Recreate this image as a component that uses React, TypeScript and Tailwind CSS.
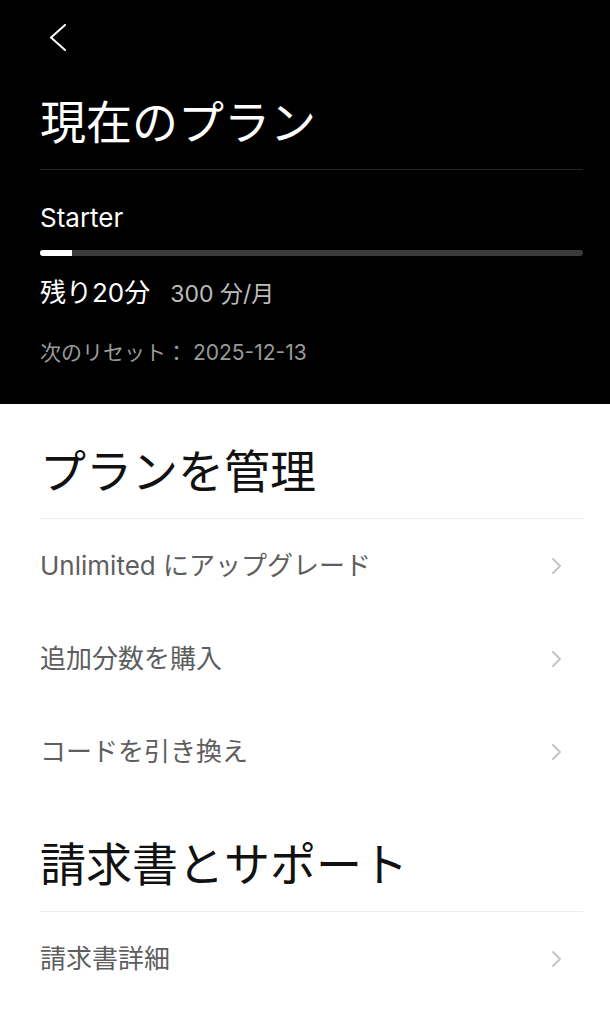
const FONT = "font-['Inter','Noto_Sans_CJK_JP',sans-serif]";

const manageItems = ['Unlimited にアップグレード', '追加分数を購入', 'コードを引き換え'];
const billingItems = ['請求書詳細'];

const Row = ({ label }: { label: string }) => (
  <button type="button" className="flex h-[93px] w-full items-center justify-between text-left">
    <span className="text-[26px] leading-none text-[#5e5e5e]">{label}</span>
    <svg width="12" height="18" viewBox="0 0 12 18" fill="none" className="mr-[20px]">
      <path d="M2 2l7 7-7 7" stroke="#c4c4c4" strokeWidth="2" strokeLinecap="round" strokeLinejoin="round" />
    </svg>
  </button>
);

export default function App() {
  const used = 280;
  const total = 300;
  const remaining = total - used;

  return (
    <div className={`min-h-screen w-full bg-white ${FONT}`}>
      {/* Current plan */}
      <header className="bg-black pl-10 pr-[27px] pt-6 pb-[41px]">
        <button type="button" aria-label="戻る" className="ml-[9px] block">
          <svg width="18" height="27" viewBox="0 0 18 27" fill="none">
            <path d="M16 1L2 13.5 16 26" stroke="#fff" strokeWidth="2" strokeLinecap="round" strokeLinejoin="round" />
          </svg>
        </button>
        <h1 className="mt-[48px] text-[46px] leading-none font-normal text-white">現在のプラン</h1>
        <div className="mt-6 h-px bg-[#262626]" />

        <p className="mt-[35px] text-[26px] leading-none text-white">Starter</p>
        <div className="mt-[19px] h-[6px] w-full overflow-hidden rounded-full bg-[#3a3a3a]">
          <div className="h-full bg-white" style={{ width: `${(remaining / total) * 100 * 0.88}%` }} />
        </div>

        <div className="mt-[24px] flex items-baseline gap-[20px]">
          <span className="text-[26px] leading-none text-white">残り{remaining}分</span>
          <span className="text-[23px] leading-none text-[#bdbdbd]">{total} 分/月</span>
        </div>
        <p className="mt-[36px] text-[21px] leading-none text-[#9a9a9a]">次のリセット： 2025-12-13</p>
      </header>

      {/* Manage */}
      <section className="pl-10 pr-[27px] pt-[44px]">
        <h2 className="text-[46px] leading-none font-normal text-[#111]">プランを管理</h2>
        <div className="mt-6 h-px bg-[#ededed]" />
        {manageItems.map((item) => (
          <Row key={item} label={item} />
        ))}
      </section>

      {/* Billing */}
      <section className="pl-10 pr-[27px] pt-[43px] pb-10">
        <h2 className="text-[46px] leading-none font-normal text-[#111]">請求書とサポート</h2>
        <div className="mt-6 h-px bg-[#ededed]" />
        {billingItems.map((item) => (
          <Row key={item} label={item} />
        ))}
      </section>
    </div>
  );
}
